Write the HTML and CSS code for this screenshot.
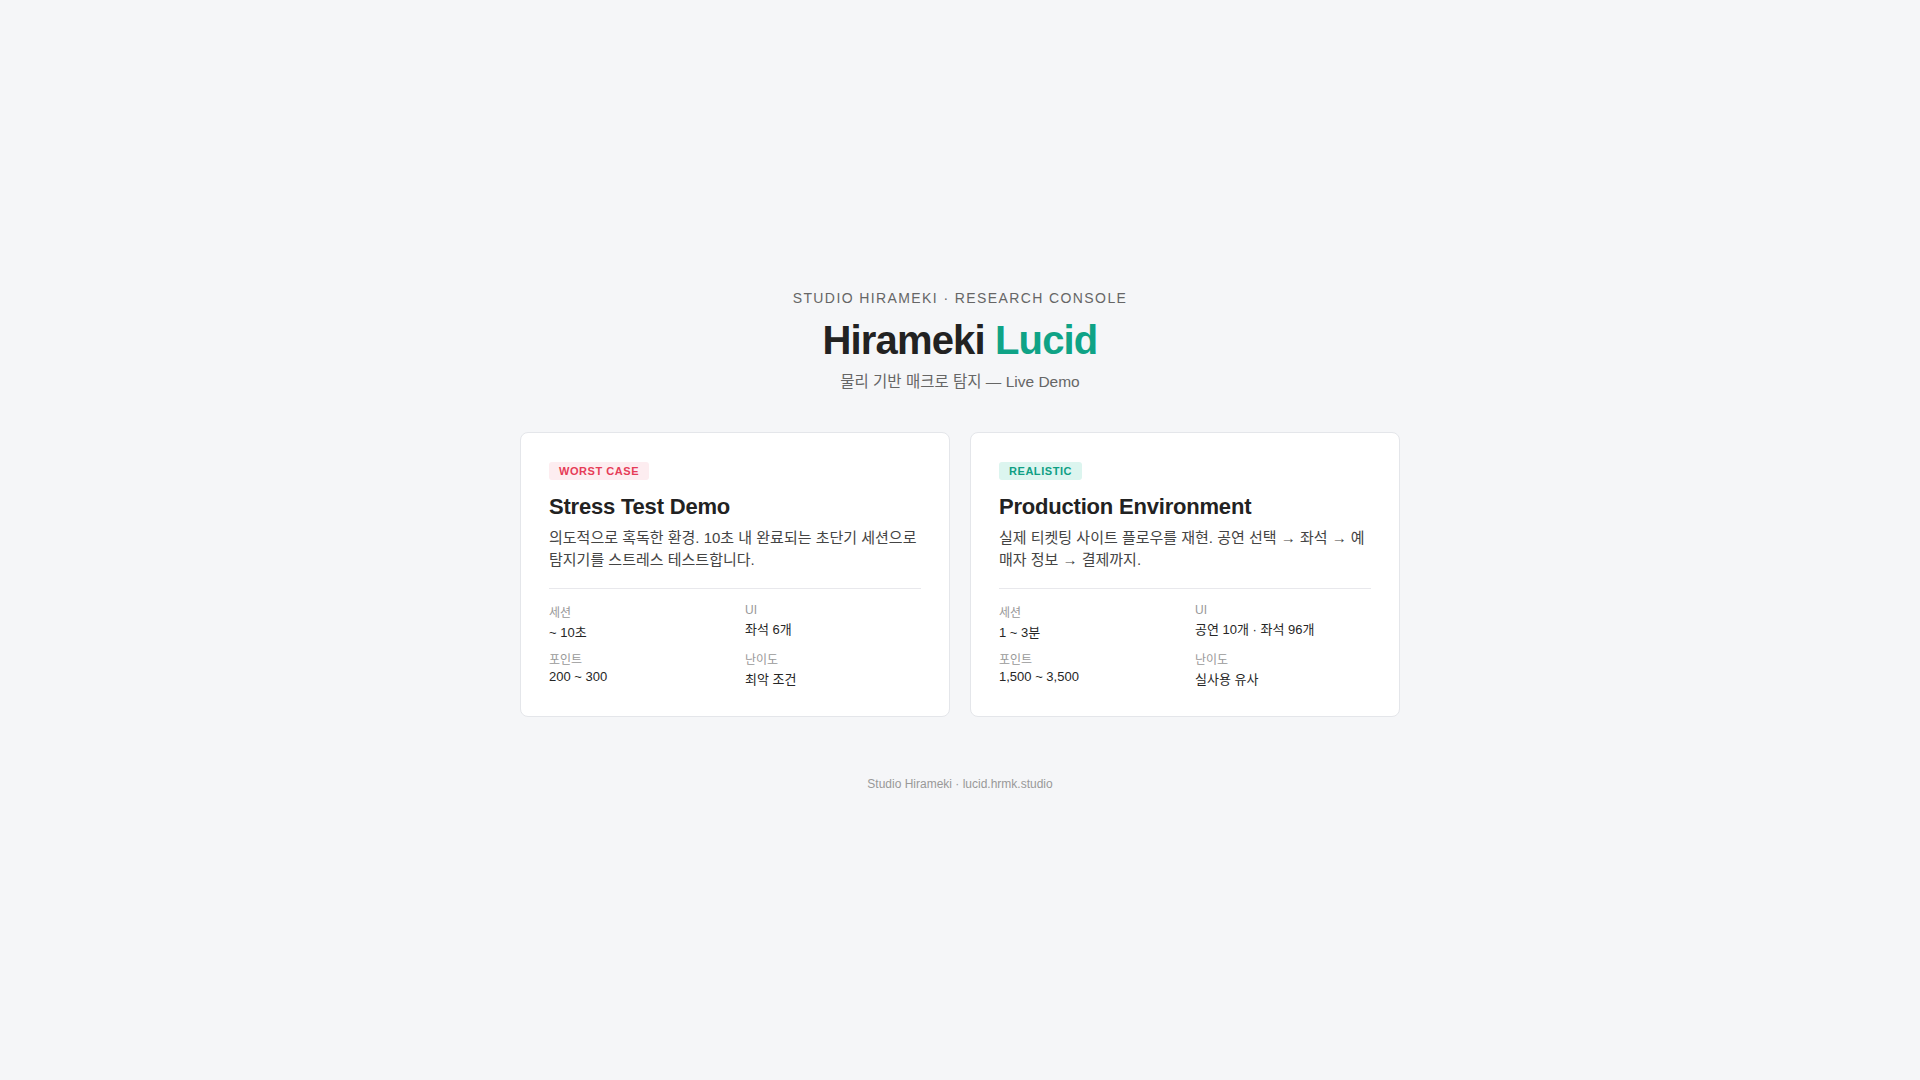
FILE: index.html
```html
<!DOCTYPE html>
<html lang="ko">
<head>
<meta charset="utf-8">
<title>Hirameki Lucid</title>
<link rel="stylesheet" href="styles.css">
</head>
<body>
<main class="page">
  <header class="hero">
    <div class="eyebrow">STUDIO HIRAMEKI · RESEARCH CONSOLE</div>
    <h1 class="title">Hirameki <span class="accent">Lucid</span></h1>
    <p class="subtitle">물리 기반 매크로 탐지 — Live Demo</p>
  </header>
  <section class="cards">
    <article class="card">
      <span class="badge badge-worst">WORST CASE</span>
      <h2 class="card-title">Stress Test Demo</h2>
      <p class="card-desc">의도적으로 혹독한 환경. 10초 내 완료되는 초단기 세션으로 탐지기를 스트레스 테스트합니다.</p>
      <div class="stats">
        <div class="stat"><div class="stat-label">세션</div><div class="stat-value">~ 10초</div></div>
        <div class="stat"><div class="stat-label">UI</div><div class="stat-value">좌석 6개</div></div>
        <div class="stat"><div class="stat-label">포인트</div><div class="stat-value">200 ~ 300</div></div>
        <div class="stat"><div class="stat-label">난이도</div><div class="stat-value">최악 조건</div></div>
      </div>
    </article>
    <article class="card">
      <span class="badge badge-real">REALISTIC</span>
      <h2 class="card-title">Production Environment</h2>
      <p class="card-desc">실제 티켓팅 사이트 플로우를 재현. 공연 선택 → 좌석 → 예매자 정보 → 결제까지.</p>
      <div class="stats">
        <div class="stat"><div class="stat-label">세션</div><div class="stat-value">1 ~ 3분</div></div>
        <div class="stat"><div class="stat-label">UI</div><div class="stat-value">공연 10개 · 좌석 96개</div></div>
        <div class="stat"><div class="stat-label">포인트</div><div class="stat-value">1,500 ~ 3,500</div></div>
        <div class="stat"><div class="stat-label">난이도</div><div class="stat-value">실사용 유사</div></div>
      </div>
    </article>
  </section>
  <footer class="footer">Studio Hirameki · lucid.hrmk.studio</footer>
</main>
</body>
</html>
```
FILE: styles.css
```css
* { box-sizing: border-box; }
html, body { margin: 0; padding: 0; }
body {
  background: #f5f6f8;
  font-family: "Liberation Sans", Arial, "Noto Sans CJK KR", sans-serif;
  color: #222;
}
.page {
  min-height: 100vh;
  display: flex;
  flex-direction: column;
  align-items: center;
  justify-content: center;
  padding: 40px 20px;
}
.hero { text-align: center; }
.eyebrow {
  font-size: 14px;
  letter-spacing: 1.4px;
  color: #666;
}
.title {
  margin: 10px 0 0;
  font-size: 40px;
  font-weight: 700;
  letter-spacing: -0.85px;
  color: #222;
  line-height: 1.2;
}
.accent { color: #0fa386; }
.subtitle {
  margin: 5px 0 0;
  font-size: 15.5px;
  color: #666;
}
.cards {
  margin-top: 41px;
  width: 880px;
  display: grid;
  grid-template-columns: 1fr 1fr;
  gap: 20px;
}
.card {
  background: #fff;
  border: 1px solid #e4e6ea;
  border-radius: 8px;
  padding: 28px;
}
.badge {
  display: inline-block;
  font-size: 11px;
  font-weight: 700;
  letter-spacing: 0.55px;
  padding: 3px 10px;
  border-radius: 3px;
  line-height: 12px;
}
.badge-worst { background: #fdedf0; color: #e63c57; }
.badge-real { background: #dcf5ef; color: #0f9f84; }
.card-title {
  margin: 14px 0 0;
  font-size: 22px;
  font-weight: 700;
  letter-spacing: -0.2px;
  color: #222;
}
.card-desc {
  margin: 7px 0 0;
  font-size: 15px;
  line-height: 1.5;
  color: #444;
}
.stats {
  margin-top: 16px;
  padding-top: 14px;
  border-top: 1px solid #e8e8ec;
  display: grid;
  grid-template-columns: 1fr 1fr;
  column-gap: 20px;
  row-gap: 9px;
}
.stat-label { font-size: 12px; color: #999; margin-bottom: 2px; }
.stat-value { font-size: 13px; color: #262626; }
.footer {
  margin-top: 60px;
  font-size: 12px;
  color: #999;
}
```
